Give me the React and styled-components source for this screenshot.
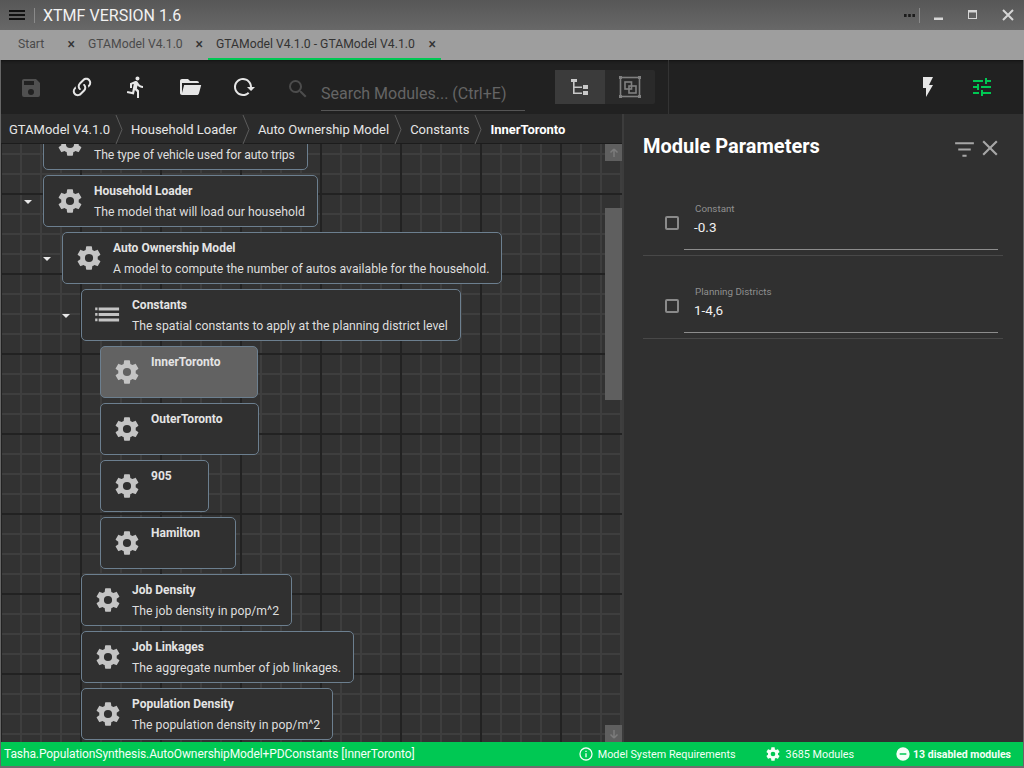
import React from "react";
import styled, { createGlobalStyle } from "styled-components";

const Global = createGlobalStyle`
  html, body { margin: 0; padding: 0; height: 100%; background: #303030; }
  body { font-family: Roboto, "Liberation Sans", sans-serif; overflow: hidden; }
  * { box-sizing: border-box; }
`;

const Shell = styled.div`
  width: 1024px; height: 768px; display: flex; flex-direction: column; background: #5e5e5e; overflow: hidden;
`;
const TitleBar = styled.header`
  height: 30px; flex: none; display: flex; align-items: center;
  background: linear-gradient(to bottom, #575757, #686868);
  padding-left: 9px; color: #f2f2f2;
`;
const Hamburger = styled.div`
  width: 16px; height: 10px; flex: none; border-top: 2px solid #111; border-bottom: 2px solid #111; position: relative;
  &::after { content: ""; position: absolute; left: 0; right: 0; top: 2px; height: 2px; background: #111; }
`;
const TitleSep = styled.div`width: 1px; height: 15px; background: #8a8a8a; margin: 0 8px 0 9px;`;
const TitleText = styled.div`font-size: 16px; letter-spacing: 0.02px; flex: 1;`;
const WinBtns = styled.div`display: flex; align-items: center; height: 100%;`;
const Dots = styled.svg`width: 11px; height: 3px; display: block; flex: none; fill: #1c1c1c;`;
const WinSep = styled.div`width: 1px; height: 15px; background: #8a8a8a; margin: 0 13px 0 4px;`;
const WinIcon = styled.svg`width: 12px; height: 12px; display: block; margin-right: ${p => p.$mr}px; color: #d6d6d6;`;

const TabBar = styled.nav`
  height: 30px; flex: none; background: #9e9e9e; display: flex; color: #444; font-size: 12.2px;
`;
const Tab = styled.div`
  width: ${p => p.$w}px; height: 100%; display: flex; align-items: center; justify-content: space-between;
  padding: 0 5px 1px ${p => p.$pl}px; color: ${p => p.$active ? "#333" : "#4a4a4a"};
  border-bottom: 2px solid ${p => p.$active ? "#00c853" : "transparent"};
  flex: none;
`;
const TabX = styled.span`font-size: 14px; font-weight: 500; color: #333; line-height: 1;`;

const Main = styled.div`
  flex: 1; min-height: 0; display: flex; flex-direction: column; border-left: 1px solid #666; border-right: 1px solid #666;
`;
const Toolbar = styled.div`
  height: 54px; flex: none; background: #212121; display: flex; align-items: center;
  box-shadow: inset 0 3px 3px -2px #111;
`;
const ToolLeft = styled.div`
  width: 668px; height: 100%; border-right: 1px solid #333; display: flex; align-items: center; flex: none; padding-left: 18px;
`;
const ToolIcon = styled.svg`
  width: ${p => p.$s || 24}px; height: ${p => p.$s || 24}px; flex: none; display: block;
  fill: ${p => p.$c || "#e6e6e6"}; margin-right: ${p => p.$mr || 0}px; margin-top: ${p => p.$mt || 0}px;
`;
const SearchBox = styled.div`
  width: 204px; height: 35px; border-bottom: 1px solid #555; color: #656565; font-size: 16px;
  display: flex; align-items: flex-end; padding-bottom: 7px; margin: 12px 30px 0 0; flex: none; white-space: nowrap;
`;
const Segment = styled.div`display: flex; width: 100px; height: 34px; background: #2a2a2a; border-radius: 2px; flex: none;`;
const SegBtn = styled.div`
  width: 50px; display: flex; align-items: center; justify-content: center;
  background: ${p => p.$on ? "#3b3b3b" : "transparent"};
`;
const ToolRight = styled.div`flex: 1; display: flex; align-items: center; justify-content: flex-end; padding-right: 29px;`;

const Body = styled.div`flex: 1; min-height: 0; display: flex;`;
const LeftCol = styled.div`width: 621px; flex: none; display: flex; flex-direction: column; min-height: 0;`;
const Crumbs = styled.div`
  height: 30px; flex: none; background: #2b2b2b; display: flex; align-items: center; padding: 1px 0 0 8px;
  font-size: 13px; color: #e8e8e8; border-bottom: 1px solid #1c1c1c;
`;
const Crumb = styled.span`font-weight: ${p => p.$b ? 700 : 400}; color: ${p => p.$b ? "#fff" : "#e6e6e6"}; white-space: nowrap; letter-spacing: ${p => p.$b ? "-0.02px" : "0"};`;
const CrumbChev = styled.svg`width: 9px; height: 29px; margin: 0 7px 0 5px; flex: none; display: block;`;

const Canvas = styled.div`
  flex: 1; min-height: 0; display: flex; overflow: hidden; background-color: #323232;
  background-image:
    linear-gradient(to right, #222 2px, transparent 2px),
    linear-gradient(to bottom, #222 2px, transparent 2px),
    linear-gradient(to right, #3e3e3e 2px, transparent 2px),
    linear-gradient(to bottom, #3e3e3e 2px, transparent 2px);
  background-size: 80px 80px, 80px 80px, 20px 20px, 20px 20px;
  background-position: -1px 0, 0 49px, -1px 0, 0 9px;
`;
const Tree = styled.div`flex: 1; min-width: 0; display: flex; flex-direction: column; margin-top: -26px; gap: 5px;`;
const Row = styled.div`display: flex; align-items: center; padding-left: ${p => p.$depth * 19 + 42}px; position: relative;`;
const Caret = styled.div`
  position: absolute; left: ${p => p.$depth * 19 + 23}px; top: 25px; width: 0; height: 0;
  border-left: 4px solid transparent; border-right: 4px solid transparent; border-top: 4px solid #e8e8e8;
`;
const Node = styled.div`
  height: 52px; border: 1px solid #6c7f8f; border-radius: 5px;
  background: ${p => p.$sel ? "#626262" : "#303030"};
  display: flex; align-items: flex-start; padding: 0 12px;
  width: ${p => p.$w ? p.$w + "px" : "auto"}; flex: none;
`;
const NodeIcon = styled.svg`width: 28px; height: 28px; fill: #c4c4c4; flex: none; margin: 11px 10px 0 0; display: block;`;
const NodeText = styled.div`display: flex; flex-direction: column; white-space: nowrap;`;
const NodeTitle = styled.div`font-size: 12px; font-weight: 700; color: #e4e4e4; line-height: 14px; min-height: 14px; margin-top: 8px;`;
const NodeDesc = styled.div`font-size: 12.25px; color: #dedede; line-height: 14px; margin-top: 7px; letter-spacing: ${p => p.$ls || 0}px;`;

const ScrollCol = styled.div`width: 17px; flex: none; display: flex; flex-direction: column;`;
const ScrollArrow = styled.div`height: 17px; flex: none; background: #5f5f5f; display: flex; align-items: center; justify-content: center; color: #7c7c7c;`;
const ScrollGap = styled.div`flex: ${p => p.$f};`;
const ScrollThumb = styled.div`height: 192px; flex: none; background: #5f5f5f;`;

const Panel = styled.aside`
  flex: 1; min-width: 0; background: #303030; border-left: 2px solid #3c3c3c; display: flex; flex-direction: column;
`;
const PanelHead = styled.div`display: flex; align-items: center; height: 32px; margin-top: 16px; padding: 0 20px 0 19px;`;
const PanelTitle = styled.h2`font-size: 20px; font-weight: 700; color: #fff; margin: 0; flex: 1; line-height: 28px;`;
const PanelIcon = styled.svg`width: ${p => p.$s}px; height: ${p => p.$s}px; fill: #a6a6a6; display: block; flex: none; margin-top: 4px;`;
const Params = styled.div`padding: 0 20px 0 19px; margin-top: 11px;`;
const Param = styled.div`
  height: 83px; border-bottom: 1px solid #484848; display: flex; padding: 0 5px 0 22px;
`;
const Check = styled.div`width: 14px; height: 14px; border: 2px solid #8a8a8a; border-radius: 2px; margin-top: 43px; flex: none;`;
const Field = styled.div`flex: 1; margin: 30px 0 5px 5px; border-bottom: 1px solid #8c8c8c; display: flex; flex-direction: column;`;
const FieldLabel = styled.label`font-size: 9.8px; color: #8f8f8f; line-height: 12px; padding-left: 11px;`;
const FieldValue = styled.div`font-size: 13.5px; color: #f0f0f0; line-height: 16px; margin-top: 4px; padding-left: 10px;`;

const Status = styled.footer`
  height: 24px; flex: none; background: #00c853; color: #f4fff7; display: flex; align-items: center; padding: 0 12px 0 3px;
`;
const StatusPath = styled.div`flex: 1; white-space: nowrap; font-size: 12px; letter-spacing: -0.1px;`;
const StatusItem = styled.div`
  display: flex; align-items: center; gap: ${p => p.$g}px; margin-right: ${p => p.$mr || 0}px; white-space: nowrap;
  font-size: ${p => p.$b ? 10.5 : 10.8}px; font-weight: ${p => p.$b ? 700 : 400};
`;
const StatusIcon = styled.svg`width: 16px; height: 16px; fill: #f4fff7; display: block; flex: none;`;
const BottomEdge = styled.div`height: 2px; flex: none; background: #6e6e6e;`;

const GEAR = "M12,15.5A3.5,3.5 0 0,1 8.5,12A3.5,3.5 0 0,1 12,8.5A3.5,3.5 0 0,1 15.5,12A3.5,3.5 0 0,1 12,15.5M19.43,12.97C19.47,12.65 19.5,12.33 19.5,12C19.5,11.67 19.47,11.34 19.43,11L21.54,9.37C21.73,9.22 21.78,8.95 21.66,8.73L19.66,5.27C19.54,5.05 19.27,4.96 19.05,5.05L16.56,6.05C16.04,5.66 15.5,5.32 14.87,5.07L14.5,2.42C14.46,2.18 14.25,2 14,2H10C9.75,2 9.54,2.18 9.5,2.42L9.13,5.07C8.5,5.32 7.96,5.66 7.44,6.05L4.95,5.05C4.73,4.96 4.46,5.05 4.34,5.27L2.34,8.73C2.21,8.95 2.27,9.22 2.46,9.37L4.57,11C4.53,11.34 4.5,11.67 4.5,12C4.5,12.33 4.53,12.65 4.57,12.97L2.46,14.63C2.27,14.78 2.21,15.05 2.34,15.27L4.34,18.73C4.46,18.95 4.73,19.03 4.95,18.95L7.44,17.94C7.96,18.34 8.5,18.68 9.13,18.93L9.5,21.58C9.54,21.82 9.75,22 10,22H14C14.25,22 14.46,21.82 14.5,21.58L14.87,18.93C15.5,18.67 16.04,18.34 16.56,17.94L19.05,18.95C19.27,19.03 19.54,18.95 19.66,18.73L21.66,15.27C21.78,15.05 21.73,14.78 21.54,14.63L19.43,12.97Z";
const LINK = "M10.59,13.41C11,13.8 11,14.44 10.59,14.83C10.2,15.22 9.56,15.22 9.17,14.83C7.22,12.88 7.22,9.71 9.17,7.76V7.76L12.71,4.22C14.66,2.27 17.83,2.27 19.78,4.22C21.73,6.17 21.73,9.34 19.78,11.29L18.29,12.78C18.3,11.96 18.17,11.14 17.89,10.36L18.36,9.88C19.54,8.71 19.54,6.81 18.36,5.64C17.19,4.46 15.29,4.46 14.12,5.64L10.59,9.17C9.41,10.34 9.41,12.24 10.59,13.41M13.41,9.17C13.8,8.78 14.44,8.78 14.83,9.17C16.78,11.12 16.78,14.29 14.83,16.24V16.24L11.29,19.78C9.34,21.73 6.17,21.73 4.22,19.78C2.27,17.83 2.27,14.66 4.22,12.71L5.71,11.22C5.7,12.04 5.83,12.86 6.11,13.65L5.64,14.12C4.46,15.29 4.46,17.19 5.64,18.36C6.81,19.54 8.71,19.54 9.88,18.36L13.41,14.83C14.59,13.66 14.59,11.76 13.41,10.59C13,10.2 13,9.56 13.41,9.17Z";
const SAVE = "M15,9H5V5H15M12,19A3,3 0 0,1 9,16A3,3 0 0,1 12,13A3,3 0 0,1 15,16A3,3 0 0,1 12,19M17,3H5C3.89,3 3,3.9 3,5V19A2,2 0 0,0 5,21H19A2,2 0 0,0 21,19V7L17,3Z";
const RUN = "M13.5,5.5C14.59,5.5 15.5,4.58 15.5,3.5C15.5,2.38 14.59,1.5 13.5,1.5C12.39,1.5 11.5,2.38 11.5,3.5C11.5,4.58 12.39,5.5 13.5,5.5M9.89,19.38L10.89,15L13,17V23H15V15.5L12.89,13.5L13.5,10.5C14.79,12 16.79,13 19,13V11C17.09,11 15.5,10 14.69,8.58L13.69,7C13.29,6.38 12.69,6 12,6C11.69,6 11.5,6.08 11.19,6.08L6,8.28V13H8V9.58L9.79,8.88L8.19,17L3.29,16L2.89,18L9.89,19.38Z";
const FOLDER = "M19,20H4C2.89,20 2,19.1 2,18V6C2,4.89 2.89,4 4,4H10L12,6H19A2,2 0 0,1 21,8H21L4,8V18L6.14,10H23.21L20.93,18.5C20.7,19.37 19.92,20 19,20Z";
const RELOAD = "M2 12C2 16.97 6.03 21 11 21C13.39 21 15.68 20.06 17.4 18.4L15.9 16.9C14.63 18.25 12.86 19 11 19C4.76 19 1.64 11.46 6.05 7.05C10.46 2.64 18 5.77 18 12H15L19 16H19.1L23 12H20C20 7.03 15.97 3 11 3C6.03 3 2 7.03 2 12Z";
const SEARCH = "M9.5,3A6.5,6.5 0 0,1 16,9.5C16,11.11 15.41,12.59 14.44,13.73L14.71,14H15.5L20.5,19L19,20.5L14,15.5V14.71L13.73,14.44C12.59,15.41 11.11,16 9.5,16A6.5,6.5 0 0,1 3,9.5A6.5,6.5 0 0,1 9.5,3M9.5,5C7,5 5,7 5,9.5C5,12 7,14 9.5,14C12,14 14,12 14,9.5C14,7 12,5 9.5,5Z";
const BOLT = "M7,2V13H10V22L17,10H13L17,2H7Z";
const TUNE = "M3,17V19H9V17H3M3,5V7H13V5H3M13,21V19H21V17H13V15H11V21H13M7,9V11H3V13H7V15H9V9H7M21,13V11H11V13H21M15,9H17V7H21V5H17V3H15V9Z";
const FILTER = "M3,6H21V8H3V6M6,12H18V14H6V12M10,18H14V20H10V18Z";
const CLOSE = "M19,6.41L17.59,5L12,10.59L6.41,5L5,6.41L10.59,12L5,17.59L6.41,19L12,13.41L17.59,19L19,17.59L13.41,12L19,6.41Z";
const INFO = "M11,9H13V7H11M12,20C7.59,20 4,16.41 4,12C4,7.59 7.59,4 12,4C16.41,4 20,7.59 20,12C20,16.41 16.41,20 12,20M12,2A10,10 0 0,0 2,12A10,10 0 0,0 12,22A10,10 0 0,0 22,12A10,10 0 0,0 12,2M11,17H13V11H11V17Z";
const MINUS = "M17,13H7V11H17M12,2A10,10 0 0,0 2,12A10,10 0 0,0 12,22A10,10 0 0,0 22,12A10,10 0 0,0 12,2Z";
const LIST = "M1,5.6H3V8H1V5.6M4,5.6H21.5V8.2H4V5.6M1,10.3H3V12.7H1V10.3M4,10.2H21.5V12.8H4V10.2M1,14.9H3V17.3H1V14.9M4,14.9H21.5V17.5H4V14.9Z";

const P = ({ as: C = ToolIcon, d, ...r }) => <C viewBox="0 0 24 24" {...r}><path d={d} /></C>;

const nodes = [
  { depth: 0, id: "vehicle", desc: "The type of vehicle used for auto trips", ls: -0.1 },
  { depth: 0, title: "Household Loader", desc: "The model that will load our household", caret: true },
  { depth: 1, title: "Auto Ownership Model", desc: "A model to compute the number of autos available for the household.", caret: true },
  { depth: 2, title: "Constants", desc: "The spatial constants to apply at the planning district level", caret: true, icon: LIST },
  { depth: 3, title: "InnerToronto", sel: true, w: 158 },
  { depth: 3, title: "OuterToronto", w: 159 },
  { depth: 3, title: "905", w: 109 },
  { depth: 3, title: "Hamilton", w: 136 },
  { depth: 2, title: "Job Density", desc: "The job density in pop/m^2" },
  { depth: 2, title: "Job Linkages", desc: "The aggregate number of job linkages." },
  { depth: 2, title: "Population Density", desc: "The population density in pop/m^2" },
];

const crumbs = ["GTAModel V4.1.0", "Household Loader", "Auto Ownership Model", "Constants"];

export default function App() {
  return (
    <Shell>
      <Global />
      <TitleBar>
        <Hamburger />
        <TitleSep />
        <TitleText>XTMF VERSION 1.6</TitleText>
        <WinBtns>
          <Dots viewBox="0 0 11 3"><rect x="0" y="0" width="2.6" height="3" /><rect x="4.2" y="0" width="2.6" height="3" /><rect x="8.4" y="0" width="2.6" height="3" /></Dots>
          <WinSep />
          <WinIcon $mr={22} viewBox="0 0 12 12"><rect x="1" y="8.5" width="9" height="2.5" fill="currentColor" /></WinIcon>
          <WinIcon $mr={23} viewBox="0 0 12 12"><rect x="1.5" y="1.5" width="8" height="8" fill="none" stroke="currentColor" /><rect x="1" y="1" width="9" height="2.5" fill="currentColor" /></WinIcon>
          <WinIcon $mr={10} viewBox="0 0 12 12"><path d="M1 1L11 11M11 1L1 11" stroke="currentColor" strokeWidth="2" /></WinIcon>
        </WinBtns>
      </TitleBar>
      <TabBar>
        <Tab $w={80} $pl={18}><span>Start</span><TabX>×</TabX></Tab>
        <Tab $w={128} $pl={8}><span>GTAModel V4.1.0</span><TabX>×</TabX></Tab>
        <Tab $w={233} $pl={8} $active><span>GTAModel V4.1.0 - GTAModel V4.1.0</span><TabX>×</TabX></Tab>
      </TabBar>
      <Main>
        <Toolbar>
          <ToolLeft>
            <P d={SAVE} $c="#505050" $mr={27} $mt={1} />
            <P d={LINK} $mr={30} />
            <P d={RUN} $mr={30} />
            <P d={FOLDER} $mr={30} />
            <P d={RELOAD} $mr={30} />
            <P d={SEARCH} $c="#4c4c4c" $mr={11} $mt={3} />
            <SearchBox>Search Modules... (Ctrl+E)</SearchBox>
            <Segment>
              <SegBtn $on>
                <ToolIcon $s={24} viewBox="0 0 24 24" $c="#c9c9c9">
                  <rect x="3" y="4" width="6" height="3" />
                  <path d="M5 7h1.6v4.4H14V13H6.6v4.4H14V19H5z" />
                  <rect x="15" y="10" width="5" height="4" />
                  <rect x="15" y="16" width="5" height="4" />
                </ToolIcon>
              </SegBtn>
              <SegBtn>
                <svg width="24" height="24" viewBox="0 0 24 24" fill="none" stroke="#808080" strokeWidth="1.6">
                  <rect x="2.5" y="2.5" width="19" height="19" />
                  <rect x="7" y="7" width="6.5" height="7" />
                  <rect x="11" y="11" width="7" height="7" />
                  <path d="M1 1h3v3H1zM20 1h3v3h-3zM1 20h3v3H1zM20 20h3v3h-3z" fill="#808080" stroke="none" />
                </svg>
              </SegBtn>
            </Segment>
          </ToolLeft>
          <ToolRight>
            <P d={BOLT} $mr={30} />
            <P d={TUNE} $c="#00c853" />
          </ToolRight>
        </Toolbar>
        <Body>
          <LeftCol>
            <Crumbs>
              {crumbs.map(c => (
                <React.Fragment key={c}>
                  <Crumb>{c}</Crumb>
                  <CrumbChev viewBox="0 0 9 29"><path d="M1 0L7 14.5L1 29" fill="none" stroke="#5c5c5c" /></CrumbChev>
                </React.Fragment>
              ))}
              <Crumb $b>InnerToronto</Crumb>
            </Crumbs>
            <Canvas>
              <Tree>
                {nodes.map(n => (
                  <Row key={n.id || n.title} $depth={n.depth}>
                    {n.caret && <Caret $depth={n.depth} />}
                    <Node $sel={n.sel} $w={n.w}>
                      <P as={NodeIcon} d={n.icon || GEAR} />
                      <NodeText>
                        <NodeTitle>{n.title}</NodeTitle>
                        {n.desc && <NodeDesc $ls={n.ls}>{n.desc}</NodeDesc>}
                      </NodeText>
                    </Node>
                  </Row>
                ))}
              </Tree>
              <ScrollCol>
                <ScrollArrow><svg width="10" height="10" viewBox="0 0 10 10"><path d="M5 1L1.5 4.5M5 1L8.5 4.5M5 1V9" stroke="currentColor" strokeWidth="1.5" fill="none" /></svg></ScrollArrow>
                <ScrollGap $f={47} />
                <ScrollThumb />
                <ScrollGap $f={324} />
                <ScrollArrow><svg width="10" height="10" viewBox="0 0 10 10"><path d="M5 9L1.5 5.5M5 9L8.5 5.5M5 9V1" stroke="currentColor" strokeWidth="1.5" fill="none" /></svg></ScrollArrow>
              </ScrollCol>
            </Canvas>
          </LeftCol>
          <Panel>
            <PanelHead>
              <PanelTitle>Module Parameters</PanelTitle>
              <P as={PanelIcon} $s={25} d={FILTER} />
              <P as={PanelIcon} $s={26} d={CLOSE} />
            </PanelHead>
            <Params>
              <Param>
                <Check />
                <Field><FieldLabel>Constant</FieldLabel><FieldValue>-0.3</FieldValue></Field>
              </Param>
              <Param>
                <Check />
                <Field><FieldLabel>Planning Districts</FieldLabel><FieldValue>1-4,6</FieldValue></Field>
              </Param>
            </Params>
          </Panel>
        </Body>
        <Status>
          <StatusPath>Tasha.PopulationSynthesis.AutoOwnershipModel+PDConstants [InnerToronto]</StatusPath>
          <StatusItem $g={4} $mr={29}><P as={StatusIcon} d={INFO} />Model System Requirements</StatusItem>
          <StatusItem $g={5} $mr={41}><P as={StatusIcon} d={GEAR} />3685 Modules</StatusItem>
          <StatusItem $b $g={2}><P as={StatusIcon} d={MINUS} />13 disabled modules</StatusItem>
        </Status>
      </Main>
      <BottomEdge />
    </Shell>
  );
}
